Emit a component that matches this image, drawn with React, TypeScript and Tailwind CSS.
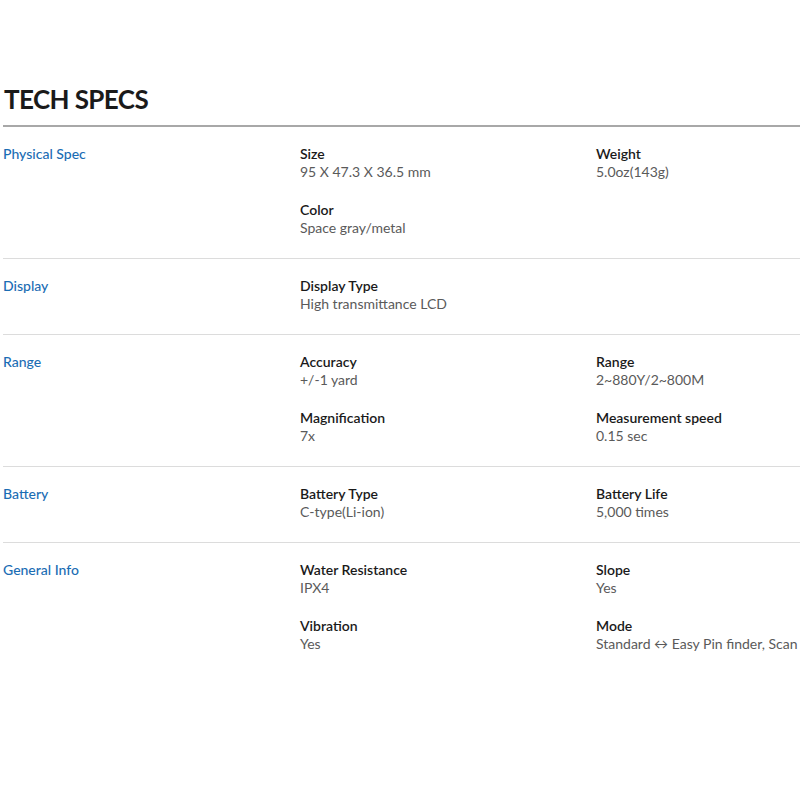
const specs = [
    {
        label: 'Physical Spec',
        items: [
            { title: 'Size', value: '95 X 47.3 X 36.5 mm' },
            { title: 'Weight', value: '5.0oz(143g)' },
            { title: 'Color', value: 'Space gray/metal' },
        ],
    },
    {
        label: 'Display',
        items: [{ title: 'Display Type', value: 'High transmittance LCD' }],
    },
    {
        label: 'Range',
        items: [
            { title: 'Accuracy', value: '+/-1 yard' },
            { title: 'Range', value: '2~880Y/2~800M' },
            { title: 'Magnification', value: '7x' },
            { title: 'Measurement speed', value: '0.15 sec' },
        ],
    },
    {
        label: 'Battery',
        items: [
            { title: 'Battery Type', value: 'C-type(Li-ion)' },
            { title: 'Battery Life', value: '5,000 times' },
        ],
    },
    {
        label: 'General Info',
        items: [
            { title: 'Water Resistance', value: 'IPX4' },
            { title: 'Slope', value: 'Yes' },
            { title: 'Vibration', value: 'Yes' },
            { title: 'Mode', value: 'Standard \u2194 Easy Pin finder, Scan' },
        ],
    },
]

const App = () => {
    return (
        <section className="h-[800px] w-[800px] overflow-hidden bg-white pl-[3px] pt-[82px] font-['Lato',sans-serif]">
            <h2 className="pl-[1px] text-[26px] font-bold leading-[34px] tracking-[-0.6px] text-[#1a1a1a]">
                TECH SPECS
            </h2>
            <div className="mt-[9px] h-[2px] bg-[#a8a8a8]" />
            {specs.map((spec) => (
                <div
                    key={spec.label}
                    className="flex border-b border-[#dcdcdc] pb-[21px] pt-[18px] text-[14px] leading-[18px] last:border-b-0"
                >
                    <p className="w-[297px] shrink-0 font-medium text-[#1b6db4]">{spec.label}</p>
                    <div className="grid flex-1 grid-cols-[296px_1fr] gap-y-[20px]">
                        {spec.items.map((item) => (
                            <div key={item.title}>
                                <p className="font-semibold text-[#1a1a1a]">{item.title}</p>
                                <p className="text-[#5a5a5a]">{item.value}</p>
                            </div>
                        ))}
                    </div>
                </div>
            ))}
        </section>
    )
}

export default App
